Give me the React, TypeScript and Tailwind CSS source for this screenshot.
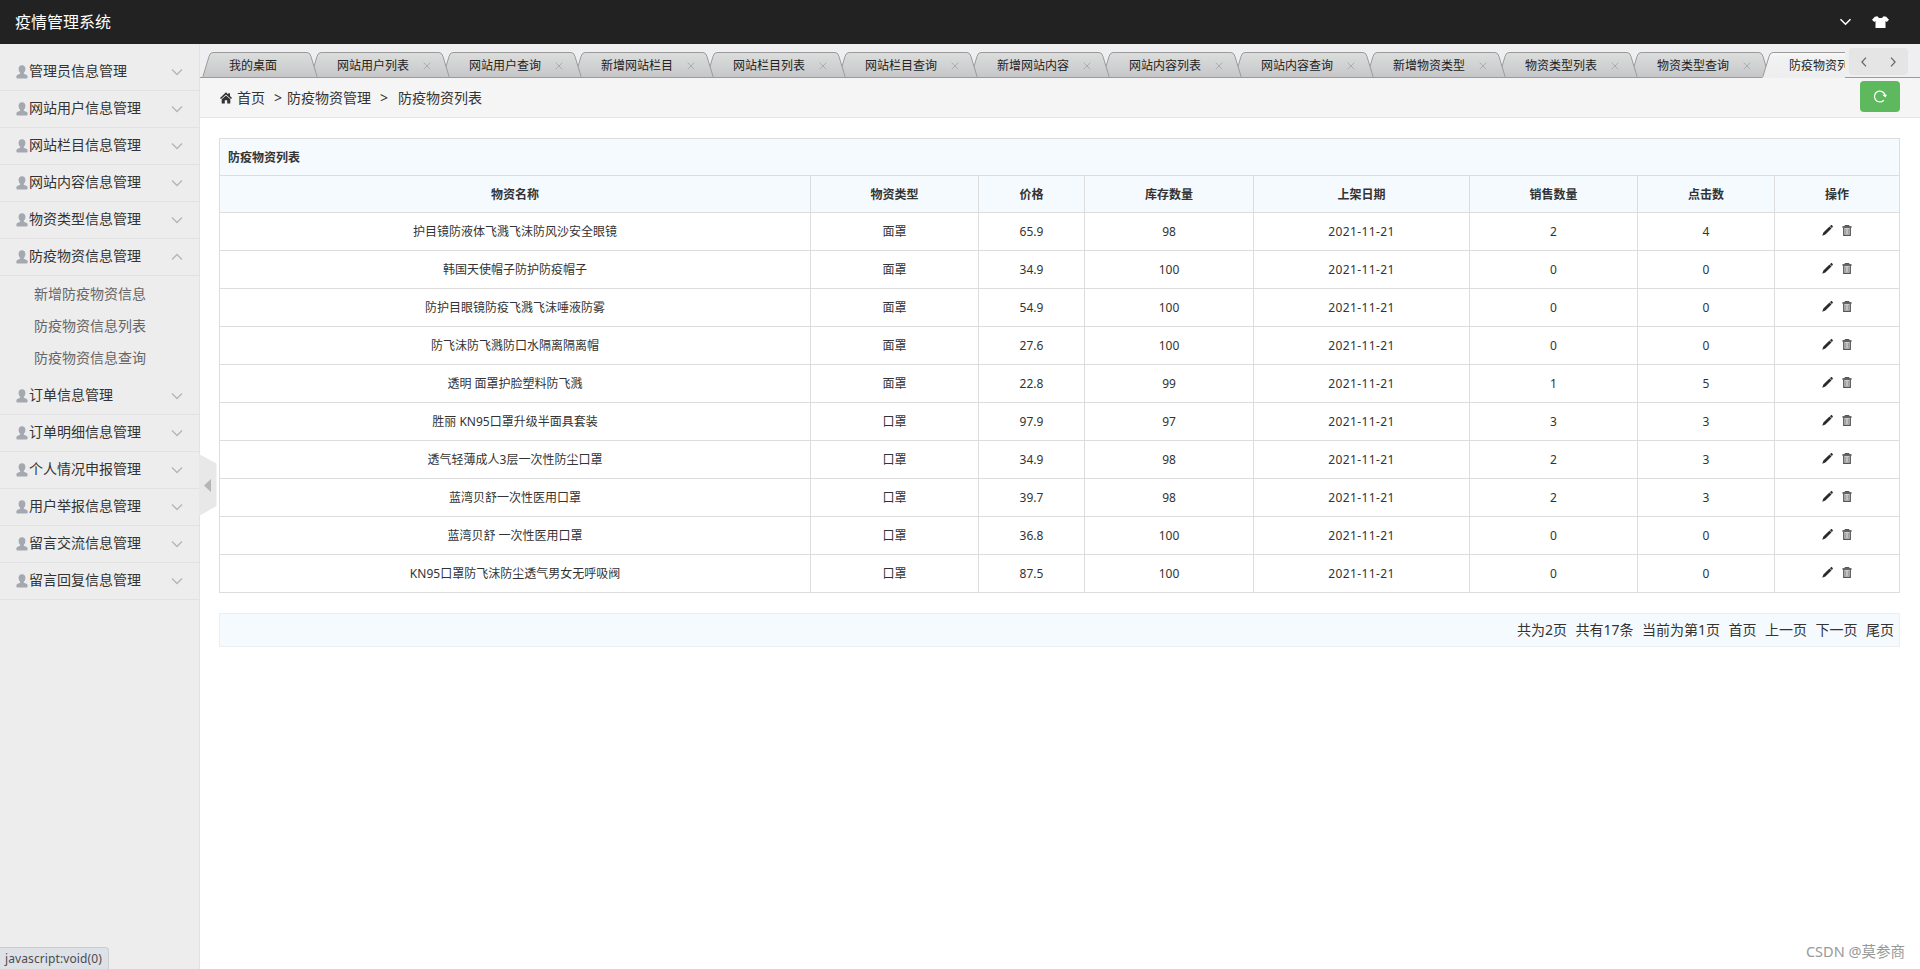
import { useState } from "react";
import clsx from "clsx";

interface MenuGroup {
  title: string;
  children?: string[];
}

interface Goods {
  name: string;
  type: string;
  price: string;
  stock: number;
  date: string;
  sold: number;
  hits: number;
}

const MENU: MenuGroup[] = [
  { title: "管理员信息管理" },
  { title: "网站用户信息管理" },
  { title: "网站栏目信息管理" },
  { title: "网站内容信息管理" },
  { title: "物资类型信息管理" },
  {
    title: "防疫物资信息管理",
    children: ["新增防疫物资信息", "防疫物资信息列表", "防疫物资信息查询"],
  },
  { title: "订单信息管理" },
  { title: "订单明细信息管理" },
  { title: "个人情况申报管理" },
  { title: "用户举报信息管理" },
  { title: "留言交流信息管理" },
  { title: "留言回复信息管理" },
];

const TABS = [
  "我的桌面",
  "网站用户列表",
  "网站用户查询",
  "新增网站栏目",
  "网站栏目列表",
  "网站栏目查询",
  "新增网站内容",
  "网站内容列表",
  "网站内容查询",
  "新增物资类型",
  "物资类型列表",
  "物资类型查询",
  "防疫物资列表",
];

const COLUMNS = [
  { label: "物资名称", width: "w-[591px]" },
  { label: "物资类型", width: "w-[168px]" },
  { label: "价格", width: "w-[106px]" },
  { label: "库存数量", width: "w-[169px]" },
  { label: "上架日期", width: "w-[216px]" },
  { label: "销售数量", width: "w-[168px]" },
  { label: "点击数", width: "w-[137px]" },
  { label: "操作", width: "w-[125px]" },
];

const DATE = "2021-11-21";

const GOODS: Goods[] = [
  { name: "护目镜防液体飞溅飞沫防风沙安全眼镜", type: "面罩", price: "65.9", stock: 98, date: DATE, sold: 2, hits: 4 },
  { name: "韩国天使帽子防护防疫帽子", type: "面罩", price: "34.9", stock: 100, date: DATE, sold: 0, hits: 0 },
  { name: "防护目眼镜防疫飞溅飞沫唾液防雾", type: "面罩", price: "54.9", stock: 100, date: DATE, sold: 0, hits: 0 },
  { name: "防飞沫防飞溅防口水隔离隔离帽", type: "面罩", price: "27.6", stock: 100, date: DATE, sold: 0, hits: 0 },
  { name: "透明 面罩护脸塑料防飞溅", type: "面罩", price: "22.8", stock: 99, date: DATE, sold: 1, hits: 5 },
  { name: "胜丽 KN95口罩升级半面具套装", type: "口罩", price: "97.9", stock: 97, date: DATE, sold: 3, hits: 3 },
  { name: "透气轻薄成人3层一次性防尘口罩", type: "口罩", price: "34.9", stock: 98, date: DATE, sold: 2, hits: 3 },
  { name: "蓝湾贝舒一次性医用口罩", type: "口罩", price: "39.7", stock: 98, date: DATE, sold: 2, hits: 3 },
  { name: "蓝湾贝舒 一次性医用口罩", type: "口罩", price: "36.8", stock: 100, date: DATE, sold: 0, hits: 0 },
  { name: "KN95口罩防飞沫防尘透气男女无呼吸阀", type: "口罩", price: "87.5", stock: 100, date: DATE, sold: 0, hits: 0 },
];

const PAGER = ["共为2页", "共有17条", "当前为第1页", "首页", "上一页", "下一页", "尾页"];

function UserIcon() {
  return (
    <svg width="12" height="14" viewBox="0 0 12 14" fill="#a4a8b1" className="shrink-0">
      <path d="M6 .2C3.700.2 2.600 1.700 2.600 3.800c0 1.700.6 3.300 1.600 4.100v.9C2.600 9.300.7 9.900.4 11.300c-.2 1 .1 1.900.600 2.200h10c.5-.3.8-1.200.6-2.200-.3-1.400-2.200-2-3.800-2.500v-.9c1-.8 1.600-2.400 1.600-4.100C9.400 1.700 8.300.2 6 .2z" />
    </svg>
  );
}

function Chevron({ up = false }: { up?: boolean }) {
  return (
    <svg width="12" height="8" viewBox="0 0 12 8" fill="none" stroke="#b5b5b5" strokeWidth="1.300">
      <path d={up ? "M1 6.500 6 1.500l5 5" : "M1 1.500l5 5 5-5"} />
    </svg>
  );
}

function HomeIcon() {
  return (
    <svg width="12" height="12" viewBox="0 0 12 12" fill="#333">
      <path d="M6 .3 0 6.100l1 1L6 2.400l5 4.700 1-1-2-2V1.300H8.300v1.300z" />
      <path d="M6 3.400 1.700 7.300v4.100h3.100V8.200h2.400v3.200h3.100V7.300z" />
    </svg>
  );
}

function PencilIcon() {
  return (
    <svg width="11" height="11" viewBox="0 0 11 11" fill="#2b2b2b">
      <path d="M8.900.3c.4-.3.800-.3 1.100 0l.7.7c.3.300.3.700 0 1.100l-.9.900L8 1.200zM7.500 1.500l2 2-6.100 6.100L.200 10.800l1.200-3.200z" />
    </svg>
  );
}

function TrashIcon() {
  return (
    <svg width="10" height="11" viewBox="0 0 10 11" fill="none" stroke="#555">
      <path d="M1.700 3v7.400h6.600V3" fill="#ccc" strokeWidth="1.200" />
      <path d="M.5 2h9" strokeWidth="1.800" />
      <path d="M3.300 1.200V.6h3.400v.6" strokeWidth="1.100" />
      <path d="M3.700 4v5M6.300 4v5" strokeWidth=".8" stroke="#888" />
    </svg>
  );
}

function ShirtIcon() {
  return (
    <svg width="17" height="12" viewBox="0 0 17 12" fill="#fff">
      <path d="M5.400.2C6.200 1.500 7.200 2 8.500 2s2.300-.5 3.100-1.800L14.200.8 17 3.700l-2.200 2.200-1.300-1V12h-10V4.900l-1.300 1L0 3.700 2.800.8z" />
    </svg>
  );
}

function RefreshIcon() {
  return (
    <svg width="14" height="14" viewBox="0 0 14 14" fill="none" stroke="#fff" strokeWidth="1.300">
      <path d="M10.800 11.200A5.400 5.400 0 1 1 12.200 6.700" />
      <path d="M9.300 5.800h4.700l-1.600 2.600z" fill="#fff" stroke="none" />
    </svg>
  );
}

interface TabProps {
  label: string;
  active: boolean;
  closable: boolean;
  order: number;
}

function Tab({ label, active, closable, order }: TabProps) {
  const w = closable ? 144 : 120;
  const shape = `M.5 26C3 26 3 24 4 21L9 4.500Q10 .5 13 .5H${w - 13}Q${w - 10} .5 ${w - 9} 4.500L${w - 4} 21C${w - 3} 24 ${w - 3} 26 ${w - 0.5} 26`;

  return (
    <li
      className={clsx(
        "relative -mr-3 flex h-[26px] shrink-0 cursor-pointer items-center pl-[29px] text-xs text-[#222]",
        closable ? "w-[144px]" : "w-[120px]"
      )}
      style={{ zIndex: order }}
    >
      <svg width={w} height="26" viewBox={`0 0 ${w} 26`} className="absolute inset-0">
        <defs>
          <linearGradient id="tab-normal" x1="0" y1="0" x2="0" y2="1">
            <stop offset="0" stopColor="#dcdedd" />
            <stop offset="1" stopColor="#c6c6c8" />
          </linearGradient>
          <linearGradient id="tab-active" x1="0" y1="0" x2="0" y2="1">
            <stop offset="0" stopColor="#fafafa" />
            <stop offset="0.200" stopColor="#f0f1f1" />
            <stop offset="1" stopColor="#eeeeef" />
          </linearGradient>
        </defs>
        <path d={shape} fill={active ? "url(#tab-active)" : "url(#tab-normal)"} stroke="#9b9b9b" />
        {!active && <path d={`M0 25.500H${w}`} stroke="#9b9b9b" />}
      </svg>
      <span className="relative pt-[2px] whitespace-nowrap">{label}</span>
      {closable && (
        <svg width="8" height="8" viewBox="0 0 8 8" className="relative mt-[2px] ml-[14px]" stroke="#a9adb5" strokeWidth="1">
          <path d="M.7.7l6.600 6.600M7.300.7.7 7.300" />
        </svg>
      )}
    </li>
  );
}

export default function App() {
  const [open, setOpen] = useState(5);
  const [activeTab] = useState(TABS.length - 1);

  return (
    <div className="flex h-screen flex-col overflow-hidden bg-white font-['Noto_Sans','Noto_Sans_CJK_SC',sans-serif] text-sm text-[#333]">
      <header className="flex h-11 shrink-0 items-center justify-between bg-[#222] pr-[31px] pl-[15px] text-white">
        <h1 className="text-base leading-none">疫情管理系统</h1>
        <div className="flex items-center gap-5">
          <svg width="13" height="8" viewBox="0 0 13 8" fill="none" stroke="#fff" strokeWidth="1.600">
            <path d="M1.500 1.200l5 5 5-5" />
          </svg>
          <ShirtIcon />
        </div>
      </header>

      <div className="flex min-h-0 flex-1">
        <aside className="relative flex w-[200px] shrink-0 flex-col border-r border-[#e2e2e2] bg-[#ededed] pt-[10px]">
          {MENU.map((group, i) => (
            <div key={group.title}>
              <button
                onClick={() => setOpen(open === i ? -1 : i)}
                className="flex h-[37px] w-full items-center border-b border-[#e2e2e2] pr-[16px] pb-px pl-4"
              >
                <UserIcon />
                <span className="ml-px flex-1 pb-px text-left leading-none">{group.title}</span>
                <Chevron up={open === i} />
              </button>
              {open === i && group.children && (
                <ul className="py-[3px]">
                  {group.children.map((item) => (
                    <li key={item} className="flex h-8 items-center pb-[2px] pl-[34px] leading-none text-[#666]">
                      {item}
                    </li>
                  ))}
                </ul>
              )}
            </div>
          ))}

          {/* collapse handle */}
          <svg width="18" height="62" viewBox="0 0 18 62" className="absolute top-[410px] -right-[18px] z-10">
            <path d="M0 0 17.500 9.500V52L0 62z" fill="#e8e8e8" />
            <path d="M12 25v13l-7-6.500z" fill="#b5b5b5" />
          </svg>

          <div className="absolute bottom-0 left-0 flex h-[22px] w-[109px] items-center rounded-tr border-t border-r border-[#c9ccd1] bg-[#dee1e6] pl-[5px] text-xs tracking-[0.1px] text-[#4a4d51]">
            javascript:void(0)
          </div>
        </aside>

        <main className="flex min-w-0 flex-1 flex-col">
          <div className="flex h-[34px] shrink-0 bg-[#efeef0] shadow-[inset_0_-1px_0_#9b9b9b]">
            <ul className="isolate flex w-[1645px] shrink-0 overflow-hidden pt-2">
              {TABS.map((label, i) => (
                <Tab
                  key={label}
                  label={label}
                  active={i === activeTab}
                  closable={i > 0}
                  order={i === activeTab ? TABS.length + 1 : TABS.length - i}
                />
              ))}
            </ul>
            <div className="mt-1 ml-1 flex h-[27px] w-[59px] items-center justify-around rounded bg-[#e5e5e5]">
              <svg width="6" height="10" viewBox="0 0 6 10" fill="none" stroke="#666" strokeWidth="1.200">
                <path d="M5 .7.900 5 5 9.300" />
              </svg>
              <svg width="6" height="10" viewBox="0 0 6 10" fill="none" stroke="#666" strokeWidth="1.200">
                <path d="M1 .7 5.100 5 1 9.300" />
              </svg>
            </div>
          </div>

          <nav className="flex h-10 shrink-0 items-center border-b border-[#e5e5e5] bg-[#f5f5f5] pr-5 pl-5">
            <HomeIcon />
            <span className="ml-[5px]">首页</span>
            <span className="ml-[9px] w-[13px]">&gt;</span>
            <span>防疫物资管理</span>
            <span className="ml-[9px] w-[18px]">&gt;</span>
            <span>防疫物资列表</span>
            <button className="mb-[3px] ml-auto flex h-[31px] w-10 items-center justify-center rounded bg-[#5eb95e]">
              <RefreshIcon />
            </button>
          </nav>

          <div className="px-[19px] pt-5 pr-5">
            <table className="w-[1681px] table-fixed border-collapse text-center text-xs leading-[18px] [&_td]:border [&_td]:border-[#ddd] [&_td]:pt-px [&_th]:border [&_th]:border-[#ddd] [&_th]:pt-[2px]">
              <colgroup>
                {COLUMNS.map((c) => (
                  <col key={c.label} className={c.width} />
                ))}
              </colgroup>
              <thead className="bg-[#f5fafe]">
                <tr className="h-[37px]">
                  <th colSpan={8} className="pl-2 text-left">
                    防疫物资列表
                  </th>
                </tr>
                <tr className="h-[37px]">
                  {COLUMNS.map((c) => (
                    <th key={c.label}>{c.label}</th>
                  ))}
                </tr>
              </thead>
              <tbody>
                {GOODS.map((g) => (
                  <tr key={g.name} className="h-[38px]">
                    <td>{g.name}</td>
                    <td>{g.type}</td>
                    <td>{g.price}</td>
                    <td>{g.stock}</td>
                    <td className="tracking-[0.4px]">{g.date}</td>
                    <td>{g.sold}</td>
                    <td>{g.hits}</td>
                    <td>
                      <div className="flex items-center justify-center gap-[9px] pb-[3px]">
                        <PencilIcon />
                        <TrashIcon />
                      </div>
                    </td>
                  </tr>
                ))}
              </tbody>
            </table>

            <div className="mt-5 flex h-[34px] w-[1681px] items-center justify-end gap-[8.5px] border border-[#eee] bg-[#f5fafe] pr-[5px] pb-px">
              {PAGER.map((p) => (
                <span key={p}>{p}</span>
              ))}
            </div>
          </div>

          <div className="mt-auto mr-[15px] mb-[7px] text-right text-[14.5px] text-[#999]">CSDN @莫参商</div>
        </main>
      </div>
    </div>
  );
}
